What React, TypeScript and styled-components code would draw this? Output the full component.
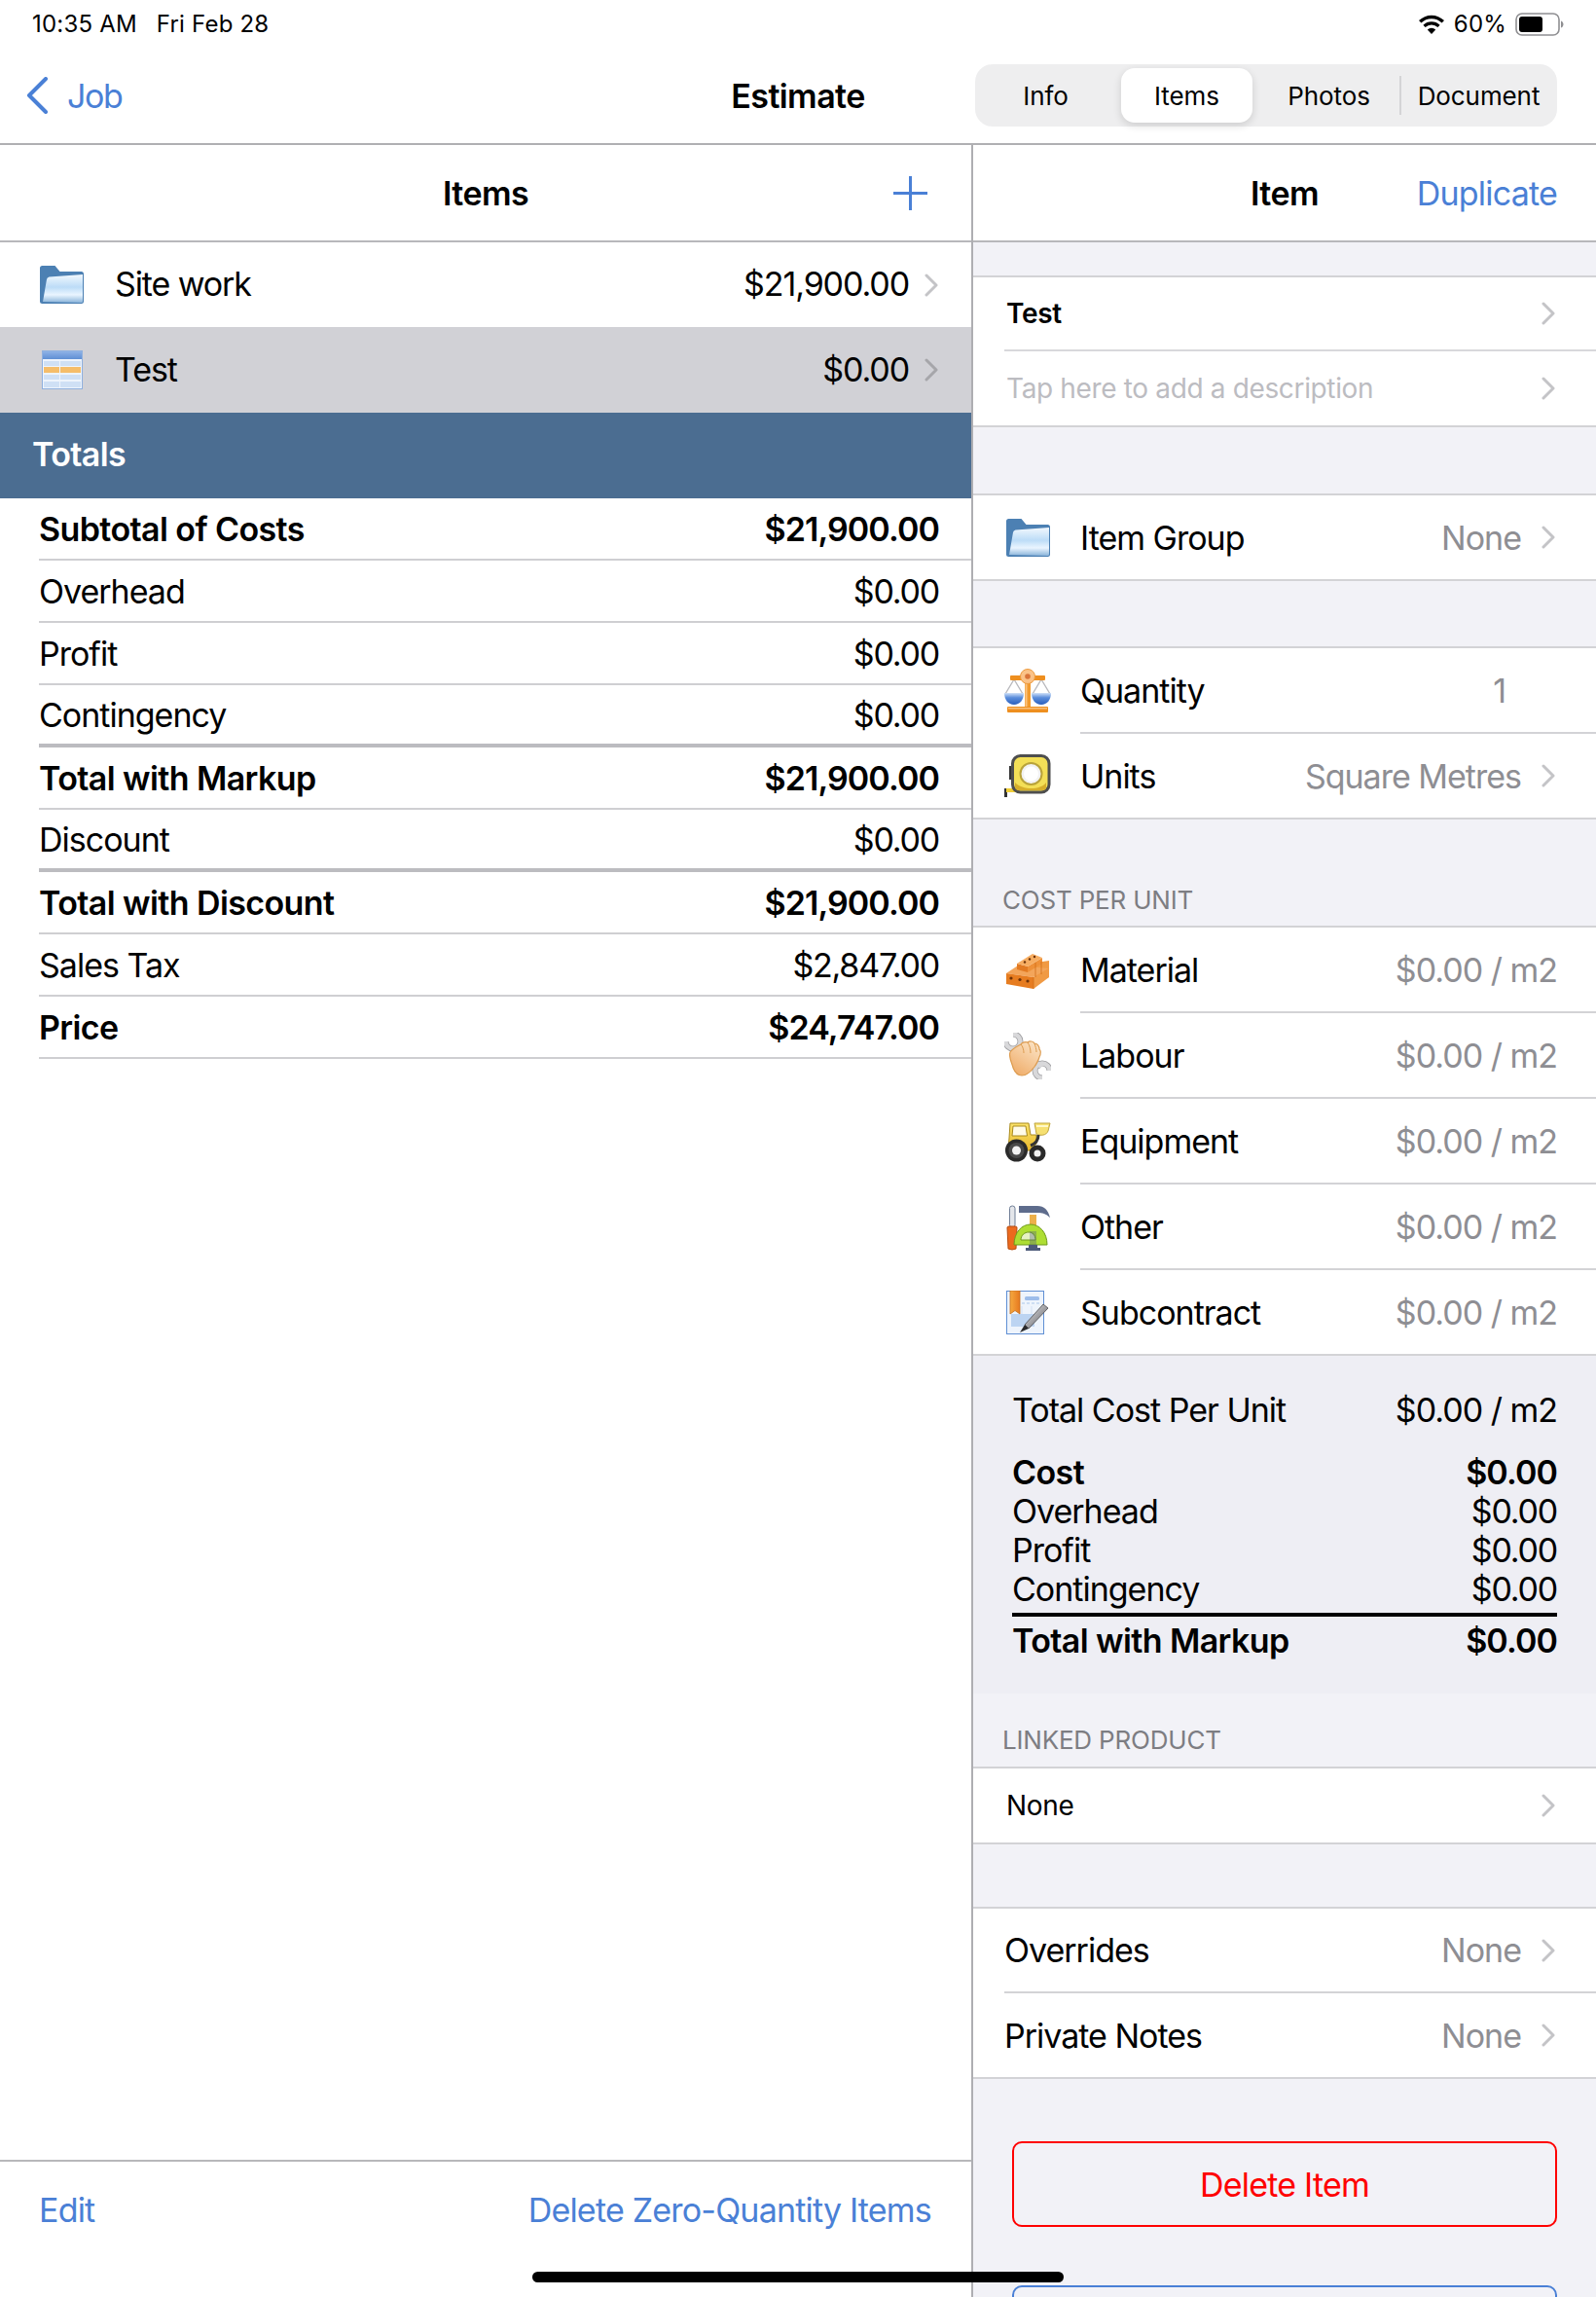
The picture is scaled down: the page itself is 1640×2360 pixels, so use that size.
import React from 'react';
import styled, { createGlobalStyle } from 'styled-components';

const BLUE = '#4a80d6';

const GlobalStyle = createGlobalStyle`
  html, body {
    margin: 0;
    padding: 0;
    background: #fff;
  }
  body {
    font-family: Inter, "Liberation Sans", sans-serif;
    color: #000;
    -webkit-font-smoothing: antialiased;
  }
`;

const Screen = styled.div`
  position: relative;
  width: 1640px;
  height: 2360px;
  overflow: hidden;
  display: flex;
  flex-direction: column;
  background: #fff;
`;

const StatusBar = styled.div`
  height: 49px;
  padding: 0 33px 0 33px;
  display: flex;
  align-items: center;
  justify-content: space-between;
  font-size: 24px;
  letter-spacing: 0.2px;
`;

const StatusGroup = styled.div<{ $gap: number }>`
  display: flex;
  align-items: center;
  gap: ${(p) => p.$gap}px;
`;

const NavBar = styled.div`
  height: 100px;
  padding: 0 40px;
  box-sizing: border-box;
  display: grid;
  grid-template-columns: minmax(0, 1fr) auto minmax(0, 1fr);
  align-items: center;
  border-bottom: 2px solid #b0b0b3;
`;

const BackLink = styled.div`
  margin-left: -13px;
  display: flex;
  align-items: center;
  gap: 20px;
  color: ${BLUE};
  font-size: 34px;
  letter-spacing: -1.4px;
`;

const NavTitle = styled.div`
  font-size: 34px;
  font-weight: 600;
  letter-spacing: -0.6px;
`;

const Segments = styled.div`
  justify-self: end;
  width: 598px;
  height: 64px;
  box-sizing: border-box;
  padding: 4px 0;
  display: grid;
  grid-template-columns: 148px 139px 150px 161px;
  background: #eeeeef;
  border-radius: 18px;
`;

const Segment = styled.div<{ $active?: boolean; $divider?: boolean; $pad?: string }>`
  position: relative;
  display: flex;
  align-items: center;
  justify-content: center;
  font-size: 26px;
  letter-spacing: -0.1px;
  margin: 0 2px;
  padding: ${(p) => p.$pad || '0'};
  background: ${(p) => (p.$active ? '#fff' : 'transparent')};
  border-radius: 14px;
  box-shadow: ${(p) => (p.$active ? '0 3px 8px rgba(0,0,0,0.14)' : 'none')};
  ${(p) =>
    p.$divider &&
    `&:before {
      content: '';
      position: absolute;
      left: -3px;
      top: 8px;
      bottom: 8px;
      width: 2px;
      background: #d4d4d6;
    }`}
`;

const Split = styled.div`
  flex: 1;
  min-height: 0;
  display: flex;
`;

const LeftPanel = styled.div`
  width: 998px;
  display: flex;
  flex-direction: column;
`;

const RightPanel = styled.div`
  flex: 1;
  min-width: 0;
  overflow: hidden;
  border-left: 2px solid #aeaeb2;
  background: #f2f2f7;
`;

const PanelHeader = styled.div<{ $pad: number }>`
  height: 100px;
  box-sizing: border-box;
  padding: 0 ${(p) => p.$pad}px;
  display: grid;
  grid-template-columns: 1fr auto 1fr;
  align-items: center;
  background: #fff;
  border-bottom: 2px solid #b8b8bb;
`;

const PanelTitle = styled.div`
  grid-column: 2;
  font-size: 34px;
  font-weight: 600;
  letter-spacing: -0.6px;
`;

const HeaderAction = styled.div`
  justify-self: end;
  display: flex;
  color: ${BLUE};
  font-size: 34px;
  letter-spacing: -0.8px;
`;

const ListRow = styled.div<{ $selected?: boolean }>`
  height: 88px;
  padding: 0 32px 0 41px;
  display: flex;
  align-items: center;
  font-size: 34px;
  letter-spacing: -1.1px;
  background: ${(p) => (p.$selected ? '#d1d1d6' : '#fff')};
  ${PanelHeader} + & {
    height: 87px;
  }
`;

const ListIcon = styled.div`
  width: 45px;
  flex: none;
  display: flex;
  justify-content: center;
`;

const ListLabel = styled.div`
  margin: 0 0 2px 32px;
  flex: 1;
`;

const ListValue = styled.div`
  margin: 0 16px 2px 0;
`;

const TotalsBar = styled.div`
  height: 88px;
  padding: 0 33px 3px;
  box-sizing: border-box;
  display: flex;
  align-items: center;
  background: #4b6d91;
  color: #fff;
  font-size: 34px;
  font-weight: 600;
  letter-spacing: -0.6px;
`;

const TotalRow = styled.div<{ $bold?: boolean; $thick?: boolean }>`
  height: 64px;
  box-sizing: border-box;
  margin-left: 40px;
  padding-right: 33px;
  display: flex;
  align-items: center;
  justify-content: space-between;
  font-size: 34px;
  font-weight: ${(p) => (p.$bold ? 600 : 400)};
  letter-spacing: ${(p) => (p.$bold ? '-0.6px' : '-1px')};
  border-bottom: ${(p) => (p.$thick ? '4px solid #bcbcc0' : '2px solid #cfcfd2')};
`;

const Amount = styled.span<{ $bold?: boolean }>`
  letter-spacing: ${(p) => (p.$bold ? '-0.9px' : '-1.2px')};
`;

const LeftFooter = styled.div`
  margin-top: auto;
  height: 141px;
  box-sizing: border-box;
  padding: 0 41px 40px 40px;
  display: flex;
  align-items: center;
  justify-content: space-between;
  border-top: 2px solid #b8b8bb;
  color: ${BLUE};
  font-size: 34px;
  letter-spacing: -0.8px;
`;

const Group = styled.div<{ $top: number }>`
  margin-top: ${(p) => p.$top}px;
  background: #fff;
  border-top: 2px solid #d3d3d6;
  border-bottom: 2px solid #d3d3d6;
`;

const TextRow = styled.div<{ $muted?: boolean; $bold?: boolean; $rule?: boolean }>`
  height: 76px;
  box-sizing: border-box;
  margin-left: 32px;
  padding: 0 40px 0 2px;
  display: flex;
  align-items: center;
  justify-content: space-between;
  font-size: 28px;
  letter-spacing: -0.35px;
  font-weight: ${(p) => (p.$bold ? 600 : 400)};
  color: ${(p) => (p.$muted ? '#bcbcc1' : '#000')};
  border-bottom: ${(p) => (p.$rule ? '2px solid #d8d8db' : 'none')};
`;

const IconRow = styled.div`
  height: 88px;
  padding-left: 32px;
  display: flex;
  align-items: center;
  &:last-child {
    height: 86px;
  }
`;

const IconSlot = styled.div`
  width: 48px;
  height: 48px;
  flex: none;
  display: flex;
  align-items: center;
  justify-content: center;
  margin-right: 30px;
`;

const IconRowBody = styled.div<{ $rule?: boolean }>`
  flex: 1;
  align-self: stretch;
  padding-right: 40px;
  display: flex;
  align-items: center;
  justify-content: space-between;
  font-size: 34px;
  letter-spacing: -1px;
  border-bottom: ${(p) => (p.$rule ? '2px solid #d3d3d6' : 'none')};
`;

const PlainRow = styled.div`
  height: 87px;
  margin-left: 32px;
  display: flex;
  &:last-child {
    height: 86px;
  }
`;

const RowValue = styled.div<{ $indent?: number }>`
  display: flex;
  align-items: center;
  gap: 21px;
  color: #8e8e93;
  padding-right: ${(p) => p.$indent || 0}px;
`;

const SectionLabel = styled.div<{ $top: number; $bottom: number }>`
  height: 26px;
  margin: ${(p) => p.$top}px 0 ${(p) => p.$bottom}px 30px;
  display: flex;
  align-items: center;
  font-size: 26px;
  letter-spacing: -0.2px;
  color: #7d7d82;
`;

const SummaryBox = styled.div`
  height: 347px;
  box-sizing: border-box;
  padding: 35px 40px 0;
  background: #eeeef4;
  font-size: 34px;
  letter-spacing: -1px;
`;

const SummaryRow = styled.div<{ $bold?: boolean; $gap?: number }>`
  height: 40px;
  margin-bottom: ${(p) => p.$gap || 0}px;
  display: flex;
  align-items: center;
  justify-content: space-between;
  font-weight: ${(p) => (p.$bold ? 600 : 400)};
  letter-spacing: ${(p) => (p.$bold ? '-0.6px' : '-1px')};
`;

const SummaryRule = styled.div`
  height: 4px;
  margin: 5px 0 4px;
  background: #000;
`;

const OutlineButton = styled.div<{ $color: string; $top: number }>`
  height: 88px;
  margin: ${(p) => p.$top}px 40px 0;
  box-sizing: border-box;
  display: flex;
  align-items: center;
  justify-content: center;
  border: 2px solid ${(p) => p.$color};
  border-radius: 10px;
  color: ${(p) => p.$color};
  font-size: 34px;
  letter-spacing: -0.8px;
`;

const HomeIndicator = styled.div`
  position: absolute;
  left: 547px;
  top: 2334px;
  width: 546px;
  height: 11px;
  border-radius: 6px;
  background: #000;
`;

const ChevronMark = styled.svg`
  flex: none;
  margin-right: 2px;
`;

const Chevron = ({ color = '#c4c4c7' }: { color?: string }) => (
  <ChevronMark width="14" height="24" viewBox="0 0 14 24" fill="none">
    <path d="M2 2l10 10L2 22" stroke={color} strokeWidth="3" strokeLinecap="round" strokeLinejoin="round" />
  </ChevronMark>
);

const BackChevron = () => (
  <svg width="22" height="38" viewBox="0 0 22 38" fill="none">
    <path d="M20 2L3 19l17 17" stroke={BLUE} strokeWidth="4" strokeLinecap="round" strokeLinejoin="round" />
  </svg>
);

const PlusIcon = () => (
  <svg width="35" height="35" viewBox="0 0 35 35">
    <path d="M17.5 0v35M0 17.5h35" stroke={BLUE} strokeWidth="3" />
  </svg>
);

const WifiIcon = () => (
  <svg width="28" height="22" viewBox="0 0 28 22">
    <path d="M14 21l-4.2-4.6a6 6 0 0 1 8.4 0z" fill="#000" />
    <path d="M7.6 14.1a9.2 9.2 0 0 1 12.8 0l2.2-2.4a12.5 12.5 0 0 0-17.2 0z" fill="#000" />
    <path d="M3.4 9.6a15.2 15.2 0 0 1 21.2 0L27 7.1a18.6 18.6 0 0 0-26 0z" fill="#000" />
  </svg>
);

const BatteryIcon = () => (
  <svg width="50" height="24" viewBox="0 0 50 24">
    <rect x="1" y="1" width="44" height="22" rx="6" fill="none" stroke="#8f8f92" strokeWidth="1.6" />
    <rect x="4" y="4" width="24" height="16" rx="3" fill="#000" />
    <path d="M47 8.5c1.6.5 2.5 2 2.5 3.5s-.9 3-2.5 3.5z" fill="#8f8f92" />
  </svg>
);

const FolderIcon = () => (
  <svg width="45" height="39" viewBox="0 0 45 39">
    <defs>
      <linearGradient id="folderFront" x1="0" y1="0" x2="0" y2="1">
        <stop offset="0" stopColor="#f2f8fe" />
        <stop offset="0.45" stopColor="#bcdcf7" />
        <stop offset="0.72" stopColor="#eaf5ff" />
        <stop offset="1" stopColor="#8ab4da" />
      </linearGradient>
    </defs>
    <path d="M0 2.5Q0 0 2.5 0h13l5 6h22Q45 6 45 8.5v28Q45 39 42.5 39H2.5Q0 39 0 36.5z" fill="#4c80b3" />
    <path d="M3 37l4-23q.3-2 2.5-2.5L44 9v27.5q0 1.5-1.5 1.5z" fill="url(#folderFront)" />
  </svg>
);

const TableIcon = () => (
  <svg width="42" height="40" viewBox="0 0 42 40">
    <defs>
      <linearGradient id="tableHead" x1="0" y1="0" x2="0" y2="1">
        <stop offset="0" stopColor="#8eb2e6" />
        <stop offset="1" stopColor="#5f8fd4" />
      </linearGradient>
    </defs>
    <rect x="0.5" y="0.5" width="41" height="39" fill="#eef4fc" stroke="#8fb0de" />
    <rect x="1" y="1" width="40" height="8" fill="url(#tableHead)" />
    <rect x="2" y="11" width="16" height="5" fill="#cfe0f5" />
    <rect x="19" y="11" width="21" height="5" fill="#cfe0f5" />
    <rect x="2" y="17" width="16" height="6" fill="#f5bd6a" />
    <rect x="19" y="17" width="21" height="6" fill="#f5bd6a" />
    <rect x="2" y="25" width="16" height="5" fill="#cfe0f5" />
    <rect x="19" y="25" width="21" height="5" fill="#cfe0f5" />
    <rect x="2" y="32" width="16" height="6" fill="#cfe0f5" />
    <rect x="19" y="32" width="21" height="6" fill="#cfe0f5" />
  </svg>
);

const ScalesIcon = () => (
  <svg width="48" height="46" viewBox="0 0 48 46">
    <defs>
      <linearGradient id="pan" x1="0" y1="0" x2="0" y2="1">
        <stop offset="0" stopColor="#cfe0f7" />
        <stop offset="0.4" stopColor="#5a8ddc" />
        <stop offset="1" stopColor="#2a5fbd" />
      </linearGradient>
    </defs>
    <path d="M10 11L1 26M10 11l9 15M38 11l-9 15M38 11l9 15" stroke="#b9b9bd" strokeWidth="1.4" fill="none" />
    <path d="M0 25h20c0 7-4 12-10 12S0 32 0 25z" fill="url(#pan)" />
    <path d="M28 25h20c0 7-4 12-10 12s-10-5-10-12z" fill="url(#pan)" />
    <rect x="6" y="7" width="36" height="5" rx="1" fill="#ee8f1f" />
    <rect x="21" y="10" width="6" height="31" fill="#f19a2e" />
    <rect x="21.5" y="14" width="2" height="26" fill="#fbc27f" />
    <rect x="3" y="39" width="42" height="6" rx="1" fill="#ee8f1f" />
    <rect x="4" y="40" width="40" height="1.5" fill="#f9c07a" />
    <circle cx="24" cy="8" r="7.5" fill="#fac288" stroke="#ee9a3c" />
    <circle cx="24" cy="8" r="2.8" fill="#d9743a" />
  </svg>
);

const TapeIcon = () => (
  <svg width="48" height="44" viewBox="0 0 48 44">
    <path d="M0 35h3v9H0z" fill="#333" />
    <rect x="2" y="35" width="18" height="4" fill="#f1cf3a" />
    <rect x="5" y="12" width="5" height="14" fill="#333" />
    <rect x="8.5" y="1.5" width="37.5" height="37.5" rx="8" fill="#f3df57" stroke="#4e4e4e" strokeWidth="3" />
    <path d="M11 29c8 8 26 8 32 0v5q0 3-4 3H15q-4 0-4-4z" fill="#d6ae2a" />
    <circle cx="27.5" cy="20" r="11" fill="#f2f2f2" stroke="#b9a33a" strokeWidth="2" />
    <circle cx="27.5" cy="20" r="7.5" fill="#fff" />
  </svg>
);

const BrickIcon = () => (
  <svg width="44" height="37" viewBox="0 0 44 37">
    <path d="M30 10l14-2v17l-14 4z" fill="#f09a44" />
    <path d="M0 21l12-8 32 3-16 9z" fill="#f3a55a" />
    <path d="M0 21l28 4v12L0 32z" fill="#e67c20" />
    <path d="M28 25l16-9v9L28 37z" fill="#f09a44" />
    <path d="M11 11l11 3v6l-11-3z" fill="#e27a22" />
    <path d="M22 14l15-9v6l-15 9z" fill="#ee9038" />
    <path d="M11 11L27 1l10 4-15 9z" fill="#f6ad62" />
    <path d="M28 25v12M30 10v15M36 9v13" stroke="#cf6c18" strokeWidth="0.8" fill="none" />
    <g fill="#6d3208">
      <circle cx="5" cy="26" r="1.6" />
      <circle cx="14" cy="27.5" r="1.6" />
      <circle cx="22" cy="29" r="1.6" />
      <circle cx="19" cy="9.5" r="1.2" />
      <circle cx="24" cy="6.5" r="1.2" />
      <circle cx="29" cy="4" r="1.2" />
    </g>
  </svg>
);

const HandIcon = () => (
  <svg width="48" height="48" viewBox="0 0 48 48">
    <defs>
      <linearGradient id="palm" x1="0.8" y1="0" x2="0.2" y2="1">
        <stop offset="0" stopColor="#fbe3c4" />
        <stop offset="1" stopColor="#efac69" />
      </linearGradient>
    </defs>
    <g fill="none">
      <path d="M9 1.5A7.5 7.5 0 1 1 1.5 9M14 14l24 21M46.5 39A7.5 7.5 0 1 0 39 46.500" stroke="#9f9fa2" strokeWidth="6" />
      <path d="M9 1.5A7.5 7.5 0 1 1 1.5 9M14 14l24 21M46.5 39A7.5 7.5 0 1 0 39 46.500" stroke="#d8d8da" strokeWidth="4.400" />
    </g>
    <path d="M6 20c2-3 7-6 11-8 1-2 5-3 7-2 2-2 6-1 7 1 3 0 5 3 5 6 2 2 1 6 0 8-1 4-3 7-5 10-3 4-7 9-13 9-4 0-7-3-9-8-1-5-5-11-3-16z" fill="url(#palm)" stroke="#dd9c50" strokeWidth="1.200" />
    <path d="M17 12c2 2 3 6 3 9M24 10c2 3 3 7 3 11M31 11c1 3 2 6 2 9" stroke="#dd9c50" strokeWidth="1" fill="none" />
  </svg>
);

const TractorIcon = () => (
  <svg width="47" height="41" viewBox="0 0 47 41">
    <defs>
      <linearGradient id="tractorBody" x1="0" y1="0" x2="0" y2="1">
        <stop offset="0" stopColor="#fbe36b" />
        <stop offset="1" stopColor="#e9b92c" />
      </linearGradient>
    </defs>
    <path d="M5 1h19l2 12h6v9l-6 7H3l1-13z" fill="url(#tractorBody)" stroke="#a98a1c" strokeWidth="1" />
    <path d="M8 4h13l1.5 10H7z" fill="#fffbe8" stroke="#a98a1c" strokeWidth="1" />
    <path d="M30 1h16l-2 8c-2 5-8 5-12 3z" fill="#f6e071" stroke="#bfa53f" strokeWidth="1" />
    <path d="M32 4h12" stroke="#fff8c8" strokeWidth="2" />
    <path d="M34 13c0 6-3 9-8 11" stroke="#333" strokeWidth="3" fill="none" />
    <circle cx="11.5" cy="29" r="11.5" fill="#2a2a2a" />
    <circle cx="11.5" cy="29" r="8" fill="#4a4a4a" />
    <circle cx="11.5" cy="29" r="4.5" fill="#f2f2f2" />
    <circle cx="33" cy="32" r="8.5" fill="#2a2a2a" />
    <circle cx="33" cy="32" r="3.5" fill="#f2f2f2" />
  </svg>
);

const ToolsIcon = () => (
  <svg width="45" height="47" viewBox="0 0 45 47">
    <rect x="3.5" y="1" width="5.5" height="22" rx="2.5" fill="#e4e6ea" stroke="#6f7e96" strokeWidth="1" />
    <path d="M1 23q0-1 2-1h6q2 0 2 1l-1 22q-4 2-8 0z" fill="#ec6a1e" stroke="#b64c10" strokeWidth="1" />
    <rect x="24" y="10" width="7" height="31" fill="#edb04a" />
    <path d="M13 1h19c7 0 11 4 13 12-4-4-8-5-13-5H13z" fill="#5e6c8c" />
    <path d="M8 41c0-13 8-21 17-21s17 8 17 21z" fill="#aede33" stroke="#6e9a1c" strokeWidth="1" />
    <path d="M15 36c0-5 4-8 8-8s7 3 7 8z" fill="#e6f2c4" stroke="#6e9a1c" strokeWidth="1" />
    <path d="M23 41h9v3h3v3H20v-3h3z" fill="#4d5a7a" />
    <rect x="24" y="27" width="7" height="14" fill="#4d5a7a" opacity="0.35" />
  </svg>
);

const ContractIcon = () => (
  <svg width="44" height="45" viewBox="0 0 44 45">
    <defs>
      <linearGradient id="ribbon" x1="0" y1="0" x2="1" y2="0">
        <stop offset="0" stopColor="#f6a93f" />
        <stop offset="1" stopColor="#e6781f" />
      </linearGradient>
      <linearGradient id="pen" x1="0" y1="0" x2="1" y2="1">
        <stop offset="0" stopColor="#efeff1" />
        <stop offset="1" stopColor="#56565b" />
      </linearGradient>
    </defs>
    <rect x="0.5" y="0.5" width="38" height="44" fill="#eef4fc" stroke="#5f8fd4" />
    <rect x="5" y="24" width="24" height="13" fill="#bcd4f2" />
    <rect x="19" y="6" width="15" height="4" rx="1.5" fill="#9dbdea" />
    <path d="M16 13h20" stroke="#c2d6f0" strokeWidth="1.5" strokeDasharray="3 2" />
    <path d="M16 16v8M26 16v8" stroke="#d3e1f4" strokeWidth="1" />
    <path d="M4 0h10v24l-5-3.5L4 24z" fill="url(#ribbon)" stroke="#c4701e" strokeWidth="0.8" />
    <path d="M19 35L38 14l5 4-20 21z" fill="url(#pen)" stroke="#4a4a4e" strokeWidth="0.8" />
    <path d="M19 35l-5 8 9-4z" fill="#2a2a2c" />
  </svg>
);

const totals = [
  { label: 'Subtotal of Costs', value: '$21,900.00', bold: true },
  { label: 'Overhead', value: '$0.00' },
  { label: 'Profit', value: '$0.00' },
  { label: 'Contingency', value: '$0.00', thick: true },
  { label: 'Total with Markup', value: '$21,900.00', bold: true },
  { label: 'Discount', value: '$0.00', thick: true },
  { label: 'Total with Discount', value: '$21,900.00', bold: true },
  { label: 'Sales Tax', value: '$2,847.00' },
  { label: 'Price', value: '$24,747.00', bold: true },
];

const costs = [
  { label: 'Material', icon: <BrickIcon /> },
  { label: 'Labour', icon: <HandIcon /> },
  { label: 'Equipment', icon: <TractorIcon /> },
  { label: 'Other', icon: <ToolsIcon /> },
  { label: 'Subcontract', icon: <ContractIcon /> },
];

const summary = [
  { label: 'Overhead', value: '$0.00' },
  { label: 'Profit', value: '$0.00' },
  { label: 'Contingency', value: '$0.00' },
];

export default function App() {
  return (
    <Screen>
      <GlobalStyle />
      <StatusBar>
        <StatusGroup $gap={20}>
          <span>10:35 AM</span>
          <span>Fri Feb 28</span>
        </StatusGroup>
        <StatusGroup $gap={9}>
          <WifiIcon />
          <span>60%</span>
          <BatteryIcon />
        </StatusGroup>
      </StatusBar>
      <NavBar>
        <BackLink>
          <BackChevron />
          Job
        </BackLink>
        <NavTitle>Estimate</NavTitle>
        <Segments>
          <Segment $pad="0 3px 0 0">Info</Segment>
          <Segment $active>Items</Segment>
          <Segment $pad="0 0 0 3px">Photos</Segment>
          <Segment $divider>Document</Segment>
        </Segments>
      </NavBar>
      <Split>
        <LeftPanel>
          <PanelHeader $pad={45}>
            <PanelTitle>Items</PanelTitle>
            <HeaderAction>
              <PlusIcon />
            </HeaderAction>
          </PanelHeader>
          <ListRow>
            <ListIcon>
              <FolderIcon />
            </ListIcon>
            <ListLabel>Site work</ListLabel>
            <ListValue>$21,900.00</ListValue>
            <Chevron />
          </ListRow>
          <ListRow $selected>
            <ListIcon>
              <TableIcon />
            </ListIcon>
            <ListLabel>Test</ListLabel>
            <ListValue>$0.00</ListValue>
            <Chevron color="#a6a6aa" />
          </ListRow>
          <TotalsBar>Totals</TotalsBar>
          {totals.map((row) => (
            <TotalRow key={row.label} $bold={row.bold} $thick={row.thick}>
              <span>{row.label}</span>
              <Amount $bold={row.bold}>{row.value}</Amount>
            </TotalRow>
          ))}
          <LeftFooter>
            <span>Edit</span>
            <span>Delete Zero-Quantity Items</span>
          </LeftFooter>
        </LeftPanel>
        <RightPanel>
          <PanelHeader $pad={40}>
            <PanelTitle>Item</PanelTitle>
            <HeaderAction>Duplicate</HeaderAction>
          </PanelHeader>
          <Group $top={34}>
            <TextRow $bold $rule>
              Test
              <Chevron />
            </TextRow>
            <TextRow $muted>
              Tap here to add a description
              <Chevron />
            </TextRow>
          </Group>
          <Group $top={68}>
            <IconRow>
              <IconSlot>
                <FolderIcon />
              </IconSlot>
              <IconRowBody>
                Item Group
                <RowValue>
                  None
                  <Chevron />
                </RowValue>
              </IconRowBody>
            </IconRow>
          </Group>
          <Group $top={67}>
            <IconRow>
              <IconSlot>
                <ScalesIcon />
              </IconSlot>
              <IconRowBody $rule>
                Quantity
                <RowValue $indent={53}>1</RowValue>
              </IconRowBody>
            </IconRow>
            <IconRow>
              <IconSlot>
                <TapeIcon />
              </IconSlot>
              <IconRowBody>
                Units
                <RowValue>
                  Square Metres
                  <Chevron />
                </RowValue>
              </IconRowBody>
            </IconRow>
          </Group>
          <SectionLabel $top={69} $bottom={14}>
            COST PER UNIT
          </SectionLabel>
          <Group $top={0}>
            {costs.map((row, i) => (
              <IconRow key={row.label}>
                <IconSlot>{row.icon}</IconSlot>
                <IconRowBody $rule={i < costs.length - 1}>
                  {row.label}
                  <RowValue>$0.00 / m2</RowValue>
                </IconRowBody>
              </IconRow>
            ))}
          </Group>
          <SummaryBox>
            <SummaryRow $gap={24}>
              <span>Total Cost Per Unit</span>
              <span>$0.00 / m2</span>
            </SummaryRow>
            <SummaryRow $bold>
              <span>Cost</span>
              <Amount $bold>$0.00</Amount>
            </SummaryRow>
            {summary.map((row) => (
              <SummaryRow key={row.label}>
                <span>{row.label}</span>
                <Amount>{row.value}</Amount>
              </SummaryRow>
            ))}
            <SummaryRule />
            <SummaryRow $bold>
              <span>Total with Markup</span>
              <Amount $bold>$0.00</Amount>
            </SummaryRow>
          </SummaryBox>
          <SectionLabel $top={34} $bottom={15}>
            LINKED PRODUCT
          </SectionLabel>
          <Group $top={0}>
            <TextRow>
              None
              <Chevron />
            </TextRow>
          </Group>
          <Group $top={64}>
            <PlainRow>
              <IconRowBody $rule>
                Overrides
                <RowValue>
                  None
                  <Chevron />
                </RowValue>
              </IconRowBody>
            </PlainRow>
            <PlainRow>
              <IconRowBody>
                Private Notes
                <RowValue>
                  None
                  <Chevron />
                </RowValue>
              </IconRowBody>
            </PlainRow>
          </Group>
          <OutlineButton $color="#ff0000" $top={64}>
            Delete Item
          </OutlineButton>
          <OutlineButton $color={BLUE} $top={60} />
        </RightPanel>
      </Split>
      <HomeIndicator />
    </Screen>
  );
}
